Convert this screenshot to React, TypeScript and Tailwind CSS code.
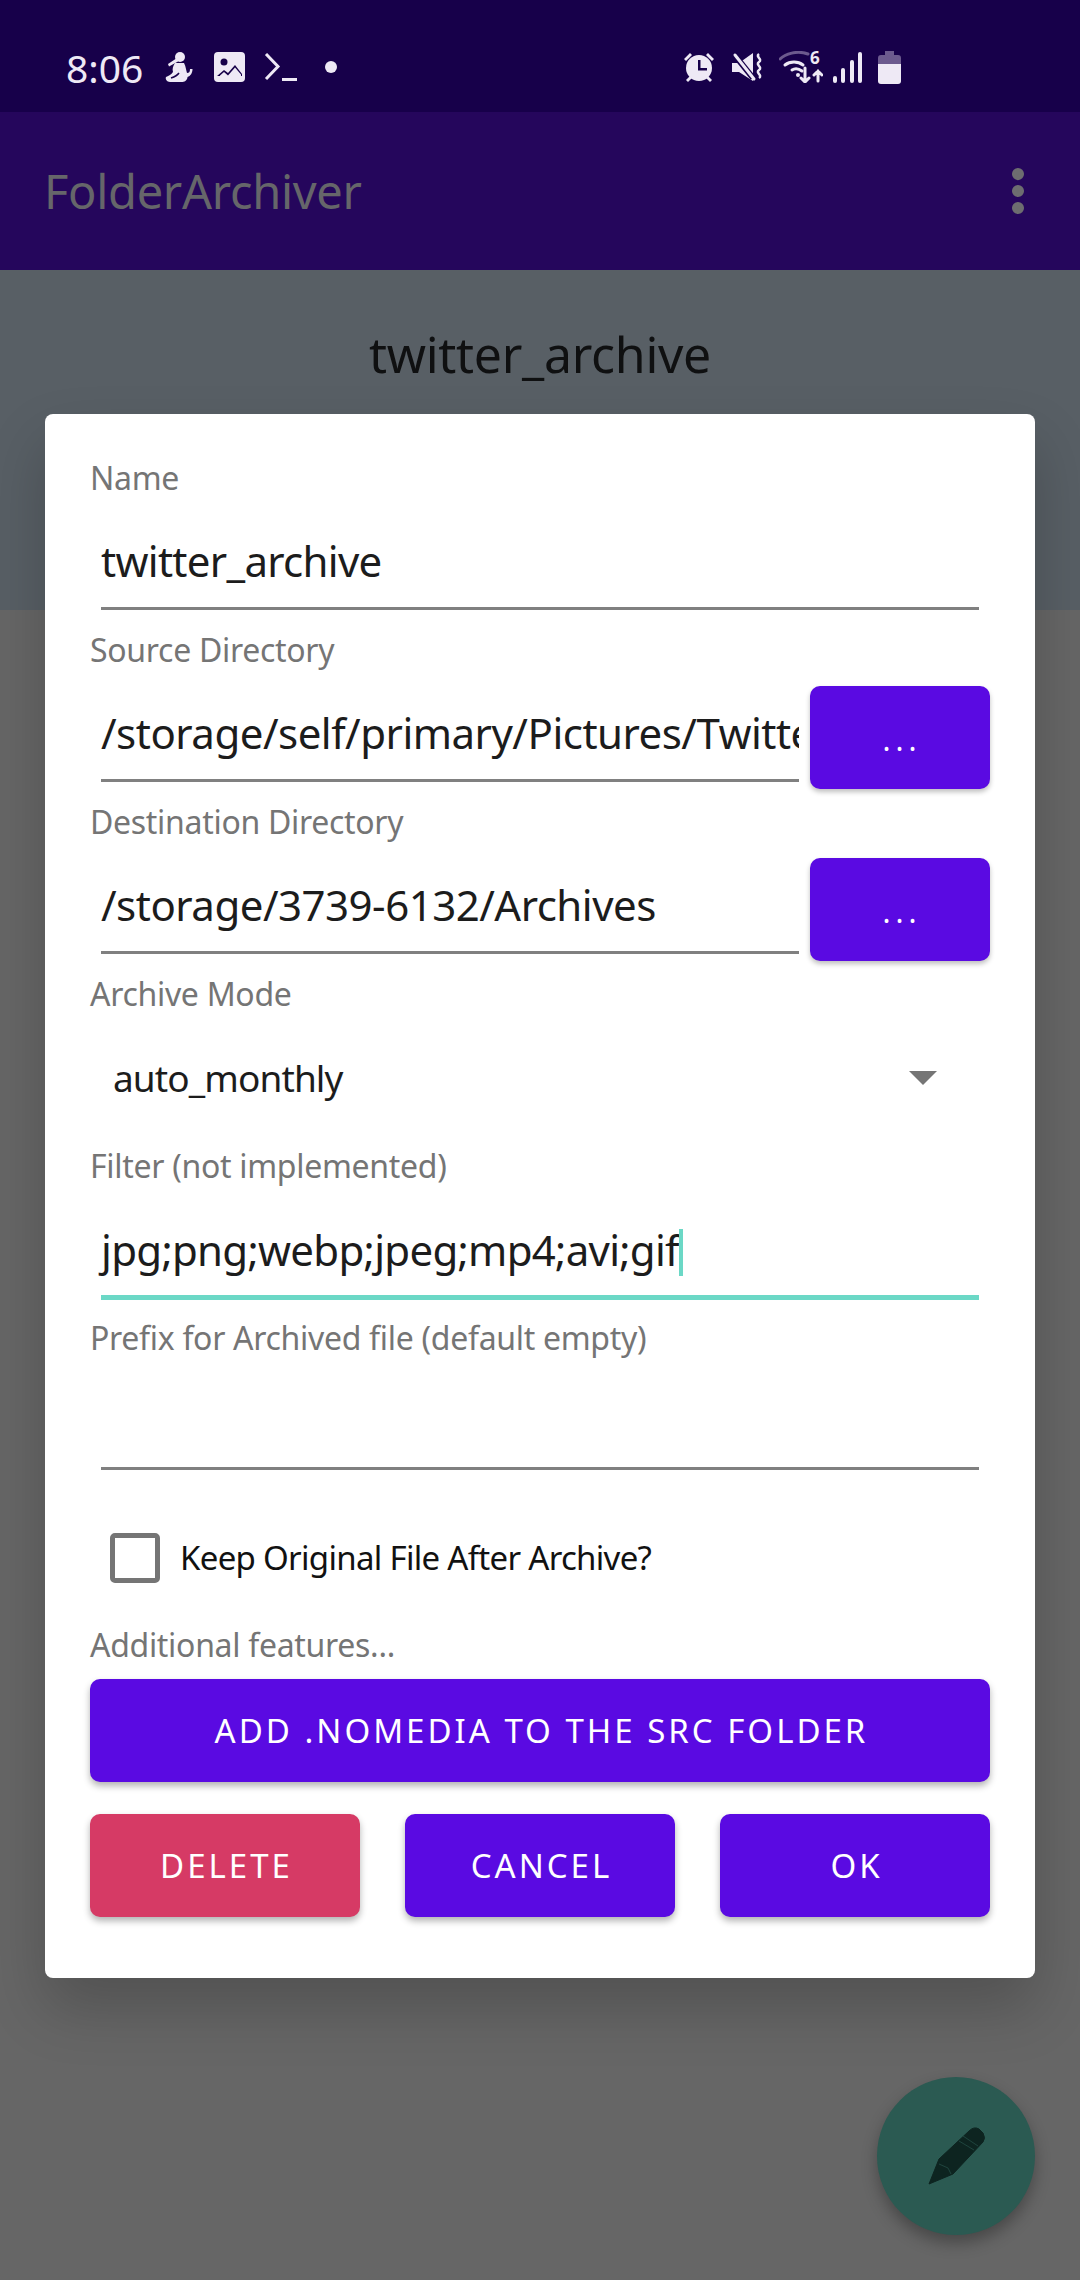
import { MoreVertical } from "lucide-react"

const dark = "#17004a"
const light = "#eee9f5"
const muted = "#6c5a8e"

function Label({ children }: { children: string }) {
  return <div className="h-[34px] pl-[45px] text-[32px] leading-[34px] tracking-[-0.3px] text-[#757575]">{children}</div>
}

function Field({ label, value, caret }: { label: string; value?: string; caret?: boolean }) {
  return (
    <div className="h-[172px] pt-[23px]">
      <Label>{label}</Label>
      <div
        className={
          caret
            ? "mx-[56px] mt-[37px] h-[80px] text-[42px] leading-[60px] tracking-[-0.7px] text-[#1c1c1c] border-b-[5px] border-[#6bd8c6]"
            : "mx-[56px] mt-[36px] h-[79px] text-[42px] leading-[60px] tracking-[-0.7px] text-[#1c1c1c] border-b-[3px] border-[#808080]"
        }
      >
        {value}
        {caret && <span className="inline-block w-[4px] h-[47px] bg-[#6bd8c6] align-[-10px]" />}
      </div>
    </div>
  )
}

function DirField({ label, value }: { label: string; value: string }) {
  return (
    <div className="h-[172px] pt-[23px]">
      <Label>{label}</Label>
      <div className="flex mt-[19px] pl-[56px] pr-[45px]">
        <div className="flex-1 min-w-0 mt-[17px] h-[79px] overflow-hidden whitespace-nowrap text-[42px] leading-[60px] tracking-[-0.5px] text-[#1c1c1c] border-b-[3px] border-[#808080]">
          {value}
        </div>
        <button className="ml-[11px] w-[180px] h-[103px] pl-[4px] pt-[4px] rounded-[10px] bg-[#5a0ae2] text-white text-[30px] tracking-[5px] shadow-[0_3px_5px_rgba(0,0,0,0.25)]">...</button>
      </div>
    </div>
  )
}

function ActionButton({ text, color }: { text: string; color: string }) {
  return (
    <button className={`h-[103px] pl-[3px] rounded-[10px] text-white text-[33px] tracking-[3px] shadow-[0_4px_7px_rgba(0,0,0,0.3)] ${color}`}>{text}</button>
  )
}

function StatusBar() {
  return (
    <div className="h-[112px] bg-[#17004a] flex items-center pl-[66px] pr-[179px] pt-[22px] text-[#eee9f5]">
      <span className="text-[39px] leading-none w-[78px]">8:06</span>
      <svg className="ml-[21px]" width="28" height="30" viewBox="0 0 28 30" fill={light}>
        <circle cx="15" cy="5" r="5" />
        <path d="M12 6 3 12l1 2.500 9-5z" />
        <path d="M10 11h9c2 4 2 7 3 10 2 0 3-1 3-4h2.500c0 4-2 7-5 8 0 2-2 5-5 5H5c-3 0-5-3-4-5 2-1 5-2 7-5-1-3 0-6 2-9z" />
        <path d="M6 26c3-1 6-2 8-5" stroke={dark} strokeWidth="1.500" fill="none" />
      </svg>
      <svg className="ml-[21px]" width="31" height="30" viewBox="0 0 31 30">
        <rect width="31" height="30" rx="4" fill={light} />
        <circle cx="10" cy="10" r="3.500" fill={dark} />
        <path d="M3 24l7-6 4 3 7-8 7 9v2H3z" fill={dark} />
        <path d="M6 23.500l4-3.500 4 3.500 7-8 6 7v2H6z" fill={light} />
      </svg>
      <svg className="ml-[19px]" width="33" height="28" viewBox="0 0 33 28" fill="none" stroke={light} strokeWidth="3">
        <path d="M2 1l12 12.500L2 26" />
        <path d="M18 26.500h15" />
      </svg>
      <span className="ml-[28px] w-[12px] h-[12px] rounded-full bg-[#eee9f5]" />

      <div className="ml-auto flex items-center">
        <svg width="32" height="30" viewBox="0 0 32 30" fill={light}>
          <circle cx="16" cy="16" r="13" />
          <path d="M1 7l6-6 2 2-6 6zM31 7l-6-6-2 2 6 6zM3 28l4-4 2 2-4 4zM29 28l-4-4-2 2 4 4z" />
          <path d="M15 8h2.500v8h6.500v2.500h-9z" fill={dark} />
        </svg>
        <svg className="ml-[17px]" width="31" height="30" viewBox="0 0 31 30" fill={light}>
          <path d="M0 11h7L21 1v28L7 20H0z" />
          <path d="M1 1l20 25" stroke={dark} strokeWidth="6" />
          <path d="M3 3l19 24" stroke={light} strokeWidth="3" strokeLinecap="round" />
          <path d="M27 2c-4 3 4 5 0 8s4 5 0 8 4 5 0 8" fill="none" stroke={light} strokeWidth="2.500" />
        </svg>
        <svg className="ml-[16px]" width="44" height="32" viewBox="0 0 44 32" fill="none" strokeWidth="3" strokeLinecap="round">
          <path d="M1 8C6 3 18-1 29 3" stroke={muted} />
          <path d="M6 14c5-4 13-4 18 0M13 19c3-2 6-2 10 1" stroke={light} />
          <circle cx="19" cy="24" r="2" fill={light} stroke="none" />
          <path d="M26 17v14M22 27l4 4 4-4M39 30V20M35 24l4-4 4 4" stroke={light} />
          <text x="31" y="13" fontSize="17" fill={light} stroke="none" fontFamily="Noto Sans" fontWeight="700">6</text>
        </svg>
        <div className="ml-[10px] flex items-end gap-[4.500px] h-[32px]">
          <span className="w-[4px] h-[7px] bg-[#eee9f5] rounded-full" />
          <span className="w-[4px] h-[15px] bg-[#eee9f5] rounded-full" />
          <span className="w-[4px] h-[23px] bg-[#eee9f5] rounded-full" />
          <span className="w-[4px] h-[31px] bg-[#eee9f5] rounded-full" />
        </div>
        <svg className="ml-[16px]" width="23" height="33" viewBox="0 0 23 33">
          <path d="M7 0h9v4h4a3 3 0 0 1 3 3v6H0V7a3 3 0 0 1 3-3h4z" fill={muted} />
          <path d="M0 13h23v17a3 3 0 0 1-3 3H3a3 3 0 0 1-3-3z" fill={light} />
        </svg>
      </div>
    </div>
  )
}

export default function App() {
  return (
    <div className="relative w-[1080px] h-[2280px] overflow-hidden bg-[#666666] font-['Noto_Sans',sans-serif]">
      <StatusBar />

      <div className="h-[158px] bg-[#25065c] flex items-center justify-between pl-[44px] pr-[33px]">
        <span className="text-[47px] tracking-[-0.3px] text-[#66666a]">FolderArchiver</span>
        <MoreVertical className="text-[#6d6d70] fill-[#6d6d70]" size={58} strokeWidth={3} />
      </div>

      <div className="h-[340px] bg-[#585f65] pt-[49px] text-center text-[50px] leading-[70px] tracking-[-0.3px] text-[#0f1011]">twitter_archive</div>

      {/* dialog sits on top of the dimmed page */}
      <div className="absolute left-[45px] top-[414px] w-[990px] h-[1564px] rounded-[8px] bg-white shadow-[0_30px_60px_rgba(0,0,0,0.2)]">
        <div className="pt-[24px]">
          <Field label="Name" value="twitter_archive" />
          <DirField label="Source Directory" value="/storage/self/primary/Pictures/Twitter" />
          <DirField label="Destination Directory" value="/storage/3739-6132/Archives" />
          <div className="h-[172px] pt-[23px]">
            <Label>Archive Mode</Label>
            <div className="mt-[41px] pl-[68px] pr-[98px] flex items-center justify-between text-[37px] leading-[52px] tracking-[-0.9px] text-[#1c1c1c]">
              auto_monthly
              <span className="w-0 h-0 border-x-[14px] border-t-[14px] border-x-transparent border-t-[#757575]" />
            </div>
          </div>
          <Field label="Filter (not implemented)" value="jpg;png;webp;jpeg;mp4;avi;gif" caret />
          <Field label="Prefix for Archived file (default empty)" />
          <div className="flex items-center h-[50px] mt-[63px] pl-[65px]">
            <span className="w-[50px] h-[50px] rounded-[5px] border-[5px] border-[#757575]" />
            <span className="ml-[20px] text-[33px] tracking-[-0.7px] text-[#111]">Keep Original File After Archive?</span>
          </div>
          <div className="mt-[45px]"><Label>Additional features...</Label></div>
          <div className="flex flex-col gap-[32px] px-[45px] mt-[17px]">
            <ActionButton text="ADD .NOMEDIA TO THE SRC FOLDER" color="bg-[#5a0ae2]" />
            <div className="grid grid-cols-3 gap-[45px]">
              <ActionButton text="DELETE" color="bg-[#d63a65]" />
              <ActionButton text="CANCEL" color="bg-[#5a0ae2]" />
              <ActionButton text="OK" color="bg-[#5a0ae2]" />
            </div>
          </div>
        </div>
      </div>

      <div className="absolute left-[877px] top-[2077px] w-[158px] h-[158px] rounded-full bg-[#2b5a52] shadow-[0_8px_16px_rgba(0,0,0,0.3)] flex items-center justify-center">
        <svg width="60" height="60" viewBox="0 0 60 60">
          <path d="M3 58 13 33 43 5Q48 0 53 3L57 7Q60 12 57 16L27 48Z" fill="#0d2420" stroke="#0d2420" strokeLinejoin="round" />
          <path d="M33 15 48 24M37 10 52 20M13 38 22 42 25 48" fill="none" stroke="#2b5a52" strokeOpacity="0.6" />
        </svg>
      </div>
    </div>
  )
}
